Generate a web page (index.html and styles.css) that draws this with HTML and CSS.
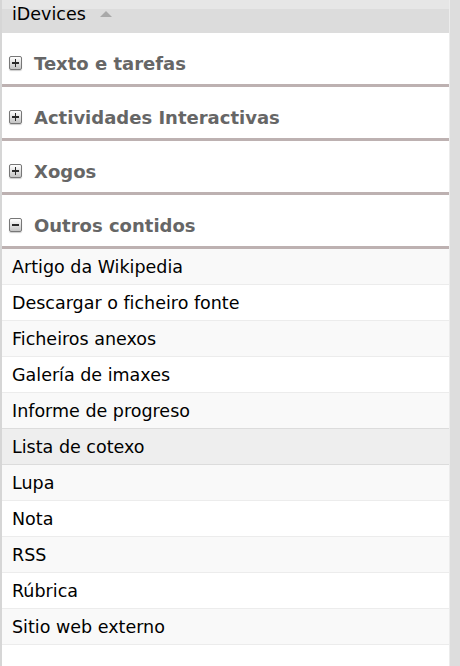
FILE: index.html
```html
<!DOCTYPE html>
<html lang="gl">
<head>
    <meta charset="UTF-8">
    <meta name="viewport" content="width=device-width, initial-scale=1.0">
    <title>iDevices</title>
    <link rel="stylesheet" href="styles.css">
</head>
<body>
    <div id="panel">
        <div id="panel-body">
            <div class="panel-title">iDevices <span class="arrow-up"></span></div>

            <div class="category">
                <span class="toggle plus"></span>Texto e tarefas
            </div>
            <div class="category">
                <span class="toggle plus"></span>Actividades Interactivas
            </div>
            <div class="category">
                <span class="toggle plus"></span>Xogos
            </div>
            <div class="category">
                <span class="toggle minus"></span>Outros contidos
            </div>

            <ul class="idevice-list">
                <li>Artigo da Wikipedia</li>
                <li>Descargar o ficheiro fonte</li>
                <li>Ficheiros anexos</li>
                <li>Galería de imaxes</li>
                <li>Informe de progreso</li>
                <li class="hover">Lista de cotexo</li>
                <li>Lupa</li>
                <li>Nota</li>
                <li>RSS</li>
                <li>Rúbrica</li>
                <li>Sitio web externo</li>
            </ul>
        </div>
        <div id="scroll-track"></div>
    </div>
</body>
</html>
```

FILE: styles.css
```css
html, body {
    margin: 0;
    height: 100%;
}
body {
    font-family: "DejaVu Sans", Verdana, sans-serif;
    background-color: #fff;
    color: #000;
}
#panel {
    display: flex;
    height: 100%;
    border-left: 2px solid #d6d6d6;
    box-sizing: border-box;
    overflow: hidden;
}
#panel-body {
    flex: 1;
    min-width: 0;
}
#scroll-track {
    width: 10px;
    flex: none;
    background-color: #dddddd;
    border-left: 1px solid #ececec;
}
.panel-title {
    height: 24px;
    margin-top: -1px;
    padding: 0 10px;
    border-top: 10px solid #e6e6e6;
    background-color: #dcdcdc;
    font-size: 17.5px;
    line-height: 10px;
}
.arrow-up {
    display: inline-block;
    width: 0;
    height: 0;
    margin-left: 9px;
    vertical-align: 3px;
    border-left: 6px solid transparent;
    border-right: 6px solid transparent;
    border-bottom: 6px solid #a9a9a9;
}
.category {
    display: flex;
    align-items: center;
    height: 42px;
    padding-top: 9px;
    padding-left: 7px;
    border-bottom: 3px solid #bdb1b1;
    font-size: 18px;
    font-weight: bold;
    color: #666;
}
.category:first-of-type {
    height: 41px;
}
.toggle {
    position: relative;
    width: 11px;
    height: 12px;
    margin-right: 12px;
    border: 1px solid #777;
    border-radius: 2px;
    background: linear-gradient(#ffffff, #c4c4c4);
    box-shadow: 0 1px 1px rgba(0, 0, 0, 0.2);
    flex: none;
}
.toggle::before,
.toggle::after {
    content: "";
    position: absolute;
    background-color: #2a2a2a;
}
.toggle::before {
    left: 2px;
    right: 2px;
    top: 5px;
    height: 2px;
}
.toggle.plus::after {
    top: 2px;
    bottom: 2px;
    left: 5px;
    width: 1px;
}
.idevice-list {
    list-style: none;
    margin: 0;
    padding: 0;
}
.idevice-list li {
    height: 35px;
    line-height: 36px;
    padding-left: 10px;
    border-bottom: 1px solid #ececec;
    font-size: 17.5px;
    white-space: nowrap;
}
.idevice-list li:nth-child(odd) {
    background-color: #f9f9f9;
}
.idevice-list li.hover {
    background-color: #eeeeee;
    border-bottom-color: #dcdcdc;
}
.idevice-list li:nth-child(5) {
    border-bottom-color: #dcdcdc;
}
```
